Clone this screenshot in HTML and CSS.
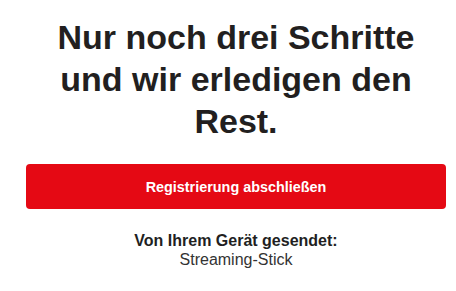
FILE: index.html
```html
<!DOCTYPE html>
<html lang="de">
<head>
    <meta charset="UTF-8">
    <meta name="viewport" content="width=device-width, initial-scale=1.0">
    <title>Registrierung</title>
    <link rel="stylesheet" href="styles.css">
</head>
<body>
    <div class="container">
        <h1 class="step-title">Nur noch drei Schritte und wir erledigen den Rest.</h1>

        <button type="button" class="finish-button">Registrierung abschließen</button>

        <div class="device-info">
            <div class="device-label">Von Ihrem Gerät gesendet:</div>
            <div class="device-name">Streaming-Stick</div>
        </div>
    </div>
</body>
</html>
```

FILE: styles.css
```css
body {
    font-family: "Liberation Sans", Arial, sans-serif;
    background-color: #fff;
    margin: 0;
}

.container {
    padding: 16px 10px 0 26px;
    text-align: center;
}

.step-title {
    margin: 0 auto;
    max-width: 380px;
    font-size: 34px;
    line-height: 42px;
    font-weight: bold;
    color: #221f1f;
}

.finish-button {
    display: block;
    width: 100%;
    height: 45px;
    margin-top: 22px;
    padding: 1px 0 0 0;
    background-color: #e50914;
    color: #fff;
    border: none;
    border-radius: 4px;
    font-family: inherit;
    font-size: 14.4px;
    font-weight: bold;
    cursor: pointer;
}

.device-info {
    margin-top: 22px;
    font-size: 16px;
    line-height: 19px;
    color: #333;
}

.device-label {
    font-weight: bold;
    color: #221f1f;
}
```
